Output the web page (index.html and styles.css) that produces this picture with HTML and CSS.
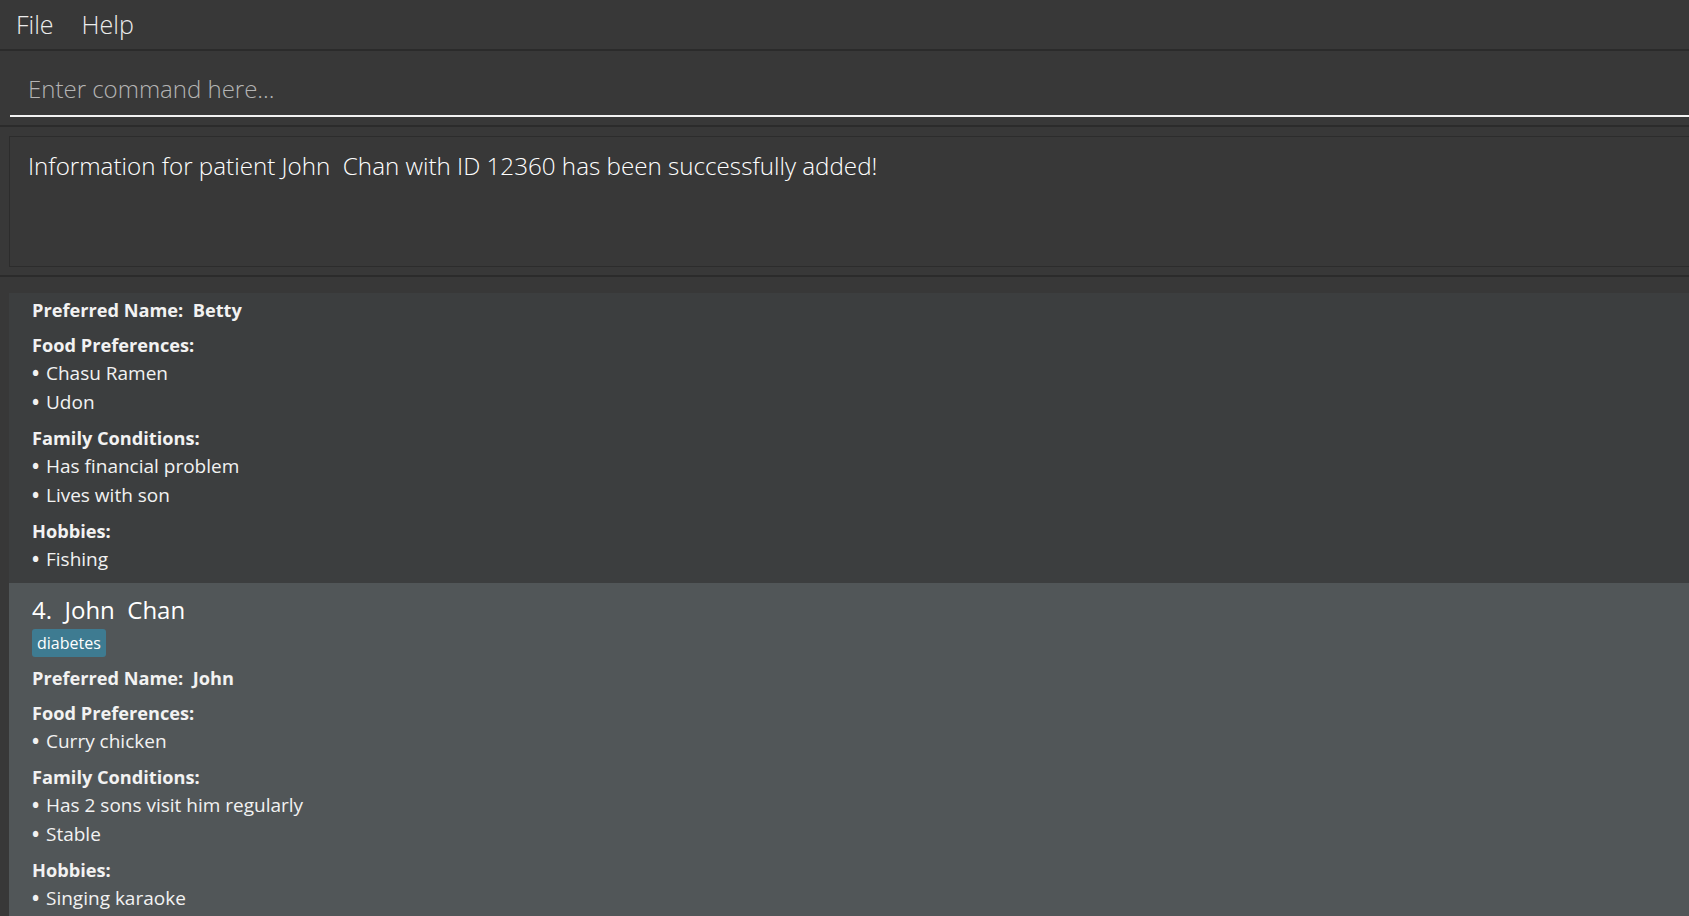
FILE: index.html
```html
<!DOCTYPE html>
<html lang="en">
<head>
<meta charset="utf-8">
<title>Patient Book</title>
<link rel="stylesheet" href="styles.css">
</head>
<body>
<div class="app">
  <nav class="menubar">
    <span class="menu-item">File</span>
    <span class="menu-item">Help</span>
  </nav>

  <section class="pane command-pane">
    <div class="command-box">
      <input class="command-input" type="text" placeholder="Enter command here...">
    </div>
  </section>

  <section class="pane result-pane">
    <div class="result-box">Information for patient John&nbsp; Chan with ID 12360 has been successfully added!</div>
  </section>

  <section class="pane list-pane">
    <ul class="patient-list">
      <li class="card card-even card-clipped">
        <div class="row label">Preferred Name:&nbsp; Betty</div>
        <div class="section">
          <div class="row label">Food Preferences:</div>
          <div class="row item"><span class="bullet">•</span>Chasu Ramen</div>
          <div class="row item"><span class="bullet">•</span>Udon</div>
        </div>
        <div class="section">
          <div class="row label">Family Conditions:</div>
          <div class="row item"><span class="bullet">•</span>Has financial problem</div>
          <div class="row item"><span class="bullet">•</span>Lives with son</div>
        </div>
        <div class="section">
          <div class="row label">Hobbies:</div>
          <div class="row item"><span class="bullet">•</span>Fishing</div>
        </div>
      </li>
      <li class="card card-odd">
        <div class="card-head">
          <div class="name">4.&nbsp; John&nbsp; Chan</div>
          <div class="tags"><span class="tag">diabetes</span></div>
        </div>
        <div class="row label">Preferred Name:&nbsp; John</div>
        <div class="section">
          <div class="row label">Food Preferences:</div>
          <div class="row item"><span class="bullet">•</span>Curry chicken</div>
        </div>
        <div class="section">
          <div class="row label">Family Conditions:</div>
          <div class="row item"><span class="bullet">•</span>Has 2 sons visit him regularly</div>
          <div class="row item"><span class="bullet">•</span>Stable</div>
        </div>
        <div class="section">
          <div class="row label">Hobbies:</div>
          <div class="row item"><span class="bullet">•</span>Singing karaoke</div>
        </div>
      </li>
    </ul>
  </section>
</div>
</body>
</html>
```

FILE: styles.css
```css
html, body {
  margin: 0;
  padding: 0;
  height: 100%;
}

body {
  background: #383838;
  color: #ffffff;
  font-family: "Open Sans", "Noto Sans", "Liberation Sans", sans-serif;
  overflow: hidden;
}

.app {
  display: flex;
  flex-direction: column;
  height: 916px;
}

/* Menu bar */
.menubar {
  display: flex;
  align-items: center;
  gap: 28px;
  height: 48px;
  padding: 0 0 1px 16px;
  background: #383838;
  border-bottom: 2px solid #2b2b2b;
}

.menu-item {
  font-size: 25px;
  font-weight: 300;
  color: #ececec;
  line-height: 1;
}

/* Panes */
.pane {
  background: #383838;
}

.command-pane {
  padding: 10px 0 8px 10px;
}

.command-box {
  border-bottom: 2px solid #f2f2f2;
}

.command-input {
  display: block;
  width: 100%;
  box-sizing: border-box;
  height: 54px;
  padding: 0 0 0 18px;
  margin: 0;
  border: 0;
  outline: none;
  background: transparent;
  color: #ffffff;
  font-family: "Open Sans", "Noto Sans", "Liberation Sans", sans-serif;
  font-size: 24px;
  font-weight: 300;
}

.command-input::placeholder {
  color: #b4b4b4;
  opacity: 1;
}

.result-pane {
  border-top: 2px solid #2b2b2b;
  padding: 9px 0 8px 9px;
}

.result-box {
  box-sizing: border-box;
  height: 131px;
  border: 1px solid #2c2c2c;
  border-right: 0;
  padding: 13px 0 0 18px;
  font-size: 24.2px;
  font-weight: 300;
  line-height: 32px;
  color: #ffffff;
}

.list-pane {
  flex: 1;
  min-height: 0;
  border-top: 2px solid #2b2b2b;
  padding: 16px 0 0 9px;
  overflow: hidden;
}

/* Patient list */
.patient-list {
  list-style: none;
  margin: 0;
  padding: 0;
}

.card {
  display: flex;
  flex-direction: column;
  gap: 8px;
  padding: 12px 0 10px 23px;
}

.card-clipped {
  padding-top: 3.5px;
  padding-bottom: 9.5px;
}

.card-even {
  background: #3c3e3f;
}

.card-odd {
  background: #515658;
}

.card-head {
  display: flex;
  flex-direction: column;
  gap: 4px;
}

.name {
  font-size: 24px;
  line-height: 30px;
  font-weight: 400;
  color: #ffffff;
}

.tags {
  display: flex;
  gap: 6px;
}

.tag {
  background: #3e7b91;
  color: #ffffff;
  font-size: 16px;
  line-height: 28px;
  padding: 0 5px;
  border-radius: 3px;
}

.section {
  display: flex;
  flex-direction: column;
}

.row {
  color: #f2f2f2;
}

.label {
  font-size: 18.2px;
  font-weight: 700;
  line-height: 27px;
}

.item {
  font-size: 19px;
  font-weight: 400;
  line-height: 29px;
}

.bullet {
  display: inline-block;
  width: 14px;
  font-weight: 700;
}
```
